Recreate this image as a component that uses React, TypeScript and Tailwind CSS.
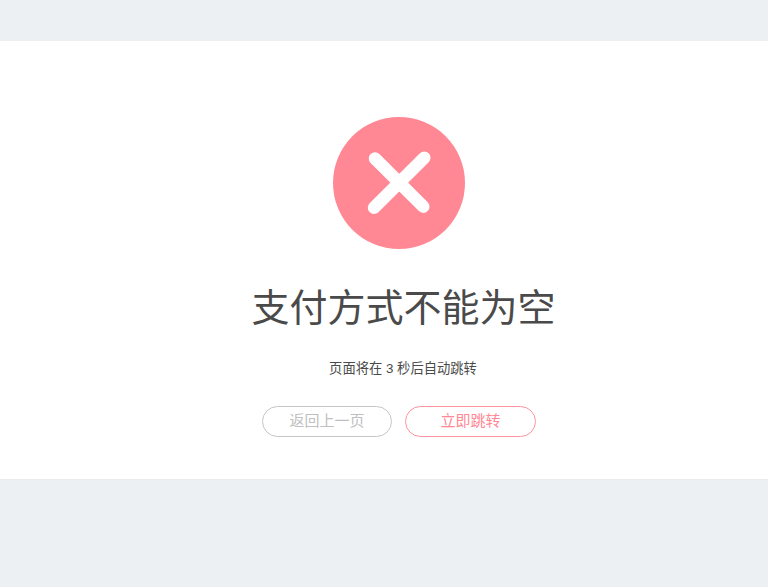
export default function App() {
  return (
    <div
      className="min-h-[587px] bg-[#edf0f3] pt-[41px]"
      style={{ fontFamily: '"Liberation Sans", "Noto Sans CJK SC", sans-serif' }}
    >
      <div className="h-[439px] bg-white border-b border-[#e9ecef] pt-[76px] pl-[30px] flex flex-col items-center">
        {/* Error icon */}
        <div className="w-[132px] h-[132px] rounded-full bg-[#ff8894] flex items-center justify-center">
          <svg width="132" height="132" viewBox="0 0 132 132" fill="none">
            <path d="M42 41.5L90.3 89.7M91.3 40.7L41 90.7" stroke="white" strokeWidth="12.5" strokeLinecap="round" />
          </svg>
        </div>

        <h1 className="mt-[31px] text-[38px] leading-[56px] text-[#4a4a4a] pl-[9px]">支付方式不能为空</h1>

        <p className="mt-[23px] text-[13.3px] leading-[20px] text-[#4a4a4a] pl-[8px]">页面将在 3 秒后自动跳转</p>

        {/* Actions */}
        <div className="mt-[27px] flex gap-[13px]">
          <button className="w-[130px] h-[31px] rounded-full border border-[#c6c6c6] text-[15px] text-[#c0c0c0]">
            返回上一页
          </button>
          <button className="w-[131px] h-[31px] rounded-full border border-[#ff939e] text-[15px] text-[#ff8894]">
            立即跳转
          </button>
        </div>
      </div>
    </div>
  );
}
